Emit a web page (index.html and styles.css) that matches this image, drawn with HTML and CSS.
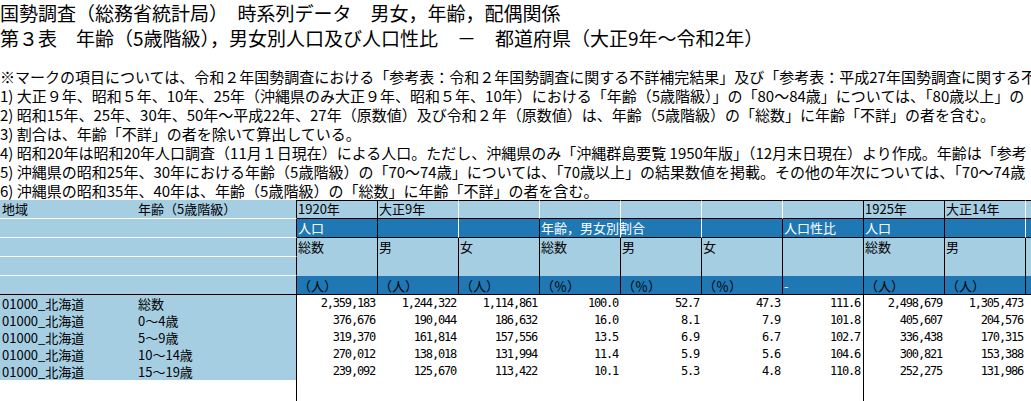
FILE: index.html
```html
<!DOCTYPE html>
<html lang="ja">
<head>
<meta charset="utf-8">
<title>国勢調査 時系列データ</title>
<link rel="stylesheet" href="styles.css">
</head>
<body>
<div class="title">
  <div>国勢調査（総務省統計局）　時系列データ　男女，年齢，配偶関係</div>
  <div>第３表　年齢（5歳階級），男女別人口及び人口性比　－　都道府県（大正9年～令和2年）</div>
</div>
<div class="notes">
  <div>※マークの項目については、令和２年国勢調査における「参考表：令和２年国勢調査に関する不詳補完結果」及び「参考表：平成27年国勢調査に関する不</div>
  <div>1) 大正９年、昭和５年、10年、25年（沖縄県のみ大正９年、昭和５年、10年）における「年齢（5歳階級）」の「80～84歳」については、「80歳以上」の</div>
  <div>2) 昭和15年、25年、30年、50年～平成22年、27年（原数値）及び令和２年（原数値）は、年齢（5歳階級）の「総数」に年齢「不詳」の者を含む。</div>
  <div>3) 割合は、年齢「不詳」の者を除いて算出している。</div>
  <div>4) 昭和20年は昭和20年人口調査（11月１日現在）による人口。ただし、沖縄県のみ「沖縄群島要覧 1950年版」（12月末日現在）より作成。年齢は「参考</div>
  <div>5) 沖縄県の昭和25年、30年における年齢（5歳階級）の「70～74歳」については、「70歳以上」の結果数値を掲載。その他の年次については、「70～74歳</div>
  <div>6) 沖縄県の昭和35年、40年は、年齢（5歳階級）の「総数」に年齢「不詳」の者を含む。</div>
</div>

<div class="sheet">
  <!-- header row 1 -->
  <div class="c la">地域</div>
  <div class="c la lb">年齢（5歳階級）</div>
  <div class="c r1 bk">1920年</div>
  <div class="c r1">大正9年</div>
  <div class="c r1"></div>
  <div class="c r1"></div>
  <div class="c r1"></div>
  <div class="c r1"></div>
  <div class="c r1 bk"></div>
  <div class="c r1 bk">1925年</div>
  <div class="c r1">大正14年</div>
  <div class="c r1"></div>

  <!-- header row 2 -->
  <div class="c la"></div>
  <div class="c la lb"></div>
  <div class="c r2 bk">人口</div>
  <div class="c r2"></div>
  <div class="c r2 bk"></div>
  <div class="c r2 over">年齢，男女別割合</div>
  <div class="c r2"></div>
  <div class="c r2 bk"></div>
  <div class="c r2 bk">人口性比</div>
  <div class="c r2 bk">人口</div>
  <div class="c r2"></div>
  <div class="c r2"></div>

  <!-- header row 3 -->
  <div class="c la"></div>
  <div class="c la lb"></div>
  <div class="c r3">総数</div>
  <div class="c r3">男</div>
  <div class="c r3">女</div>
  <div class="c r3">総数</div>
  <div class="c r3">男</div>
  <div class="c r3">女</div>
  <div class="c r3"></div>
  <div class="c r3">総数</div>
  <div class="c r3">男</div>
  <div class="c r3"></div>

  <!-- header row 4 -->
  <div class="c la"></div>
  <div class="c la lb"></div>
  <div class="c r3"></div>
  <div class="c r3"></div>
  <div class="c r3"></div>
  <div class="c r3"></div>
  <div class="c r3"></div>
  <div class="c r3"></div>
  <div class="c r3"></div>
  <div class="c r3"></div>
  <div class="c r3"></div>
  <div class="c r3"></div>

  <!-- header row 5 -->
  <div class="c la last"></div>
  <div class="c la last lb"></div>
  <div class="c r5">（人）</div>
  <div class="c r5">（人）</div>
  <div class="c r5">（人）</div>
  <div class="c r5">（％）</div>
  <div class="c r5">（％）</div>
  <div class="c r5">（％）</div>
  <div class="c r5 dash">-</div>
  <div class="c r5">（人）</div>
  <div class="c r5">（人）</div>
  <div class="c r5"></div>

  <!-- data rows -->
  <div class="c dl">01000_北海道</div>
  <div class="c dl lb">総数</div>
  <div class="c d">2,359,183</div>
  <div class="c d">1,244,322</div>
  <div class="c d">1,114,861</div>
  <div class="c d">100.0</div>
  <div class="c d">52.7</div>
  <div class="c d">47.3</div>
  <div class="c d gap">111.6</div>
  <div class="c d">2,498,679</div>
  <div class="c d">1,305,473</div>
  <div class="c d"></div>

  <div class="c dl">01000_北海道</div>
  <div class="c dl lb">0～4歳</div>
  <div class="c d">376,676</div>
  <div class="c d">190,044</div>
  <div class="c d">186,632</div>
  <div class="c d">16.0</div>
  <div class="c d">8.1</div>
  <div class="c d">7.9</div>
  <div class="c d gap">101.8</div>
  <div class="c d">405,607</div>
  <div class="c d">204,576</div>
  <div class="c d"></div>

  <div class="c dl">01000_北海道</div>
  <div class="c dl lb">5～9歳</div>
  <div class="c d">319,370</div>
  <div class="c d">161,814</div>
  <div class="c d">157,556</div>
  <div class="c d">13.5</div>
  <div class="c d">6.9</div>
  <div class="c d">6.7</div>
  <div class="c d gap">102.7</div>
  <div class="c d">336,438</div>
  <div class="c d">170,315</div>
  <div class="c d"></div>

  <div class="c dl">01000_北海道</div>
  <div class="c dl lb">10～14歳</div>
  <div class="c d">270,012</div>
  <div class="c d">138,018</div>
  <div class="c d">131,994</div>
  <div class="c d">11.4</div>
  <div class="c d">5.9</div>
  <div class="c d">5.6</div>
  <div class="c d gap">104.6</div>
  <div class="c d">300,821</div>
  <div class="c d">153,388</div>
  <div class="c d"></div>

  <div class="c dl">01000_北海道</div>
  <div class="c dl lb">15～19歳</div>
  <div class="c d">239,092</div>
  <div class="c d">125,670</div>
  <div class="c d">113,422</div>
  <div class="c d">10.1</div>
  <div class="c d">5.3</div>
  <div class="c d">4.8</div>
  <div class="c d gap">110.8</div>
  <div class="c d">252,275</div>
  <div class="c d">131,986</div>
  <div class="c d"></div>

  <!-- filler row -->
  <div class="c"></div>
  <div class="c lb"></div>
  <div class="c"></div>
  <div class="c"></div>
  <div class="c"></div>
  <div class="c"></div>
  <div class="c"></div>
  <div class="c"></div>
  <div class="c gap"></div>
  <div class="c"></div>
  <div class="c"></div>
  <div class="c"></div>
</div>
</body>
</html>
```

FILE: styles.css
```css
html, body {
  margin: 0;
  padding: 0;
  background: #ffffff;
  overflow: hidden;
}

body {
  width: 1031px;
  height: 401px;
  font-family: "Noto Sans CJK JP", "Noto Sans", sans-serif;
  color: #000000;
}

.title {
  font-size: 19px;
  line-height: 25px;
  white-space: nowrap;
}

.notes {
  margin-top: 17px;
  font-size: 15px;
  line-height: 19px;
  white-space: nowrap;
  overflow: hidden;
}

.sheet {
  display: grid;
  grid-template-columns: 136px 161px repeat(10, 81px);
  grid-template-rows: repeat(5, 19px) repeat(5, 17px) 21px;
  font-size: 13px;
}

.c {
  box-sizing: border-box;
  white-space: nowrap;
  line-height: 17px;
  padding: 0 1px;
  min-width: 0;
}

/* left header panel */
.la {
  background: #a6cee3;
  border-bottom: 1px solid #ffffff;
  padding-left: 2px;
}

.la.last {
  border-bottom-color: #000000;
}

.lb {
  border-right: 1px solid #000000;
}

/* header row 1 */
.r1 {
  background: #a6cee3;
  border-top: 1px solid #000000;
  border-bottom: 1px solid #000000;
  border-right: 1px solid #ffffff;
  line-height: 16px;
}

/* header row 2 */
.r2 {
  background: #1f78b4;
  color: #ffffff;
  border-bottom: 1px solid #000000;
  border-right: 1px solid #ffffff;
}

/* header rows 3 and 4 */
.r3 {
  background: #a6cee3;
  border-right: 1px solid #000000;
  line-height: 18px;
}

/* header row 5 */
.r5 {
  background: #1f78b4;
  border-right: 1px solid #000000;
  border-bottom: 1px solid #000000;
  line-height: 19px;
}

.bk {
  border-right-color: #000000;
}

.over {
  position: relative;
  z-index: 1;
}

.dash {
  color: #ffffff;
}

/* data rows */
.dl {
  background: #a6cee3;
  padding-left: 2px;
  line-height: 17px;
}

.d {
  background: #ffffff;
  text-align: right;
  padding-right: 3px;
  font-family: "DejaVu Sans Mono", "Liberation Mono", monospace;
  font-size: 12px;
  letter-spacing: -1.2px;
  line-height: 17px;
}

.gap {
  border-right: 1px solid #000000;
}
```
